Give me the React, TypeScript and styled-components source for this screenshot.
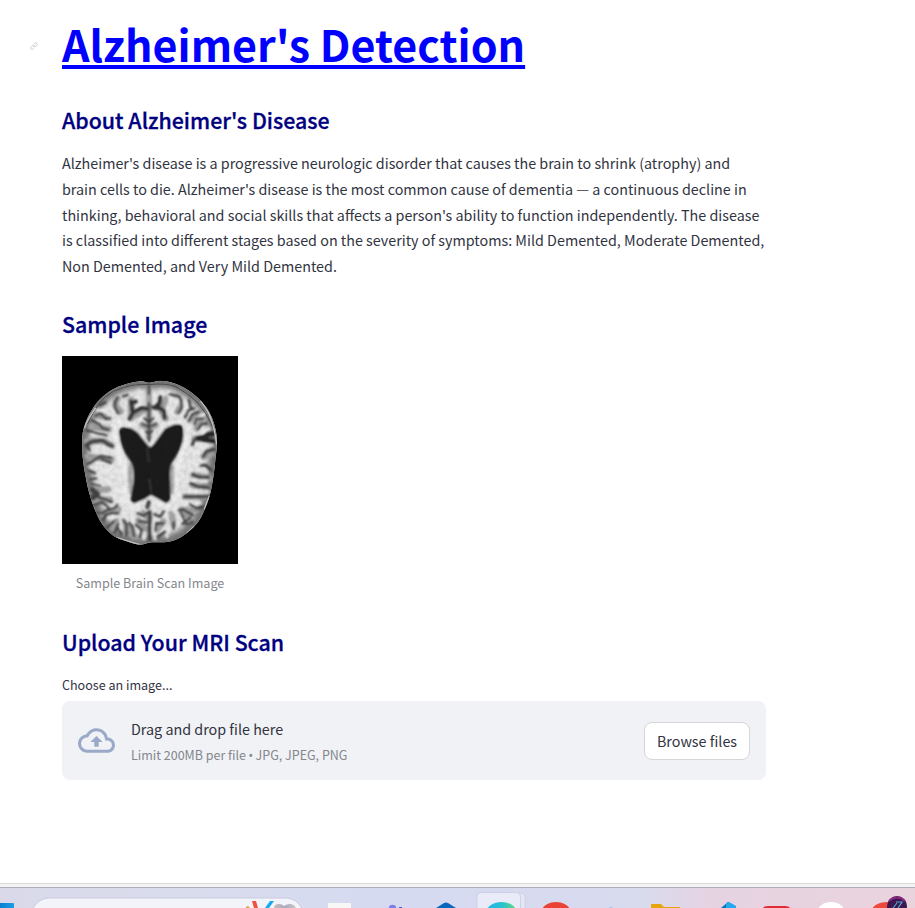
import React from "react";
import styled, { createGlobalStyle } from "styled-components";

const GlobalStyle = createGlobalStyle`
  * { box-sizing: border-box; }
  html, body { margin: 0; padding: 0; overflow: hidden; background: #fff; }
  body { font-family: "Source Sans Pro", "Noto Sans CJK SC", "Noto Sans", sans-serif; color: #31333f; }
`;

const Screen = styled.div`
  width: 915px;
  height: 908px;
  overflow: hidden;
  display: flex;
  flex-direction: column;
`;

const Main = styled.main`
  flex: 1;
  min-height: 0;
  padding: 15px 0 0 62px;
  width: 766px;
`;

const TitleRow = styled.div`
  display: flex;
  align-items: center;
  height: 60px;
  margin-left: -32px;
`;

const Anchor = styled.span`
  width: 32px;
  height: 8px;
  margin-top: 2px;
  display: flex;
`;

const Title = styled.h1`
  margin: -4px 0 0;
  color: #0000ff;
  font-size: 43px;
  line-height: 60px;
  font-weight: 700;
  white-space: nowrap;
  text-decoration: underline;
  text-decoration-thickness: 4px;
  text-underline-offset: 3px;
  text-decoration-skip-ink: none;
`;

const Heading = styled.h2<{ $top: number }>`
  margin: ${(p) => p.$top}px 0 0;
  height: 36px;
  line-height: 36px;
  color: #000080;
  font-size: 21.36px;
  font-weight: 500;
  -webkit-text-stroke: 0.3px #000080;
  white-space: nowrap;
`;

const Paragraph = styled.p`
  margin: 12.35px 0 0;
  height: 128px;
  font-size: 14.34px;
  line-height: 25.6px;
  white-space: nowrap;
`;

const Line = styled.span`
  display: block;
  width: max-content;
`;

const Figure = styled.figure`
  margin: 13.65px 0 0;
  width: 176px;
`;

const Caption = styled.figcaption`
  margin-top: 8px;
  height: 22px;
  text-align: center;
  font-size: 12.55px;
  line-height: 22px;
  color: #85868d;
`;

const Label = styled.label`
  display: block;
  margin-top: 14px;
  height: 22px;
  font-size: 12.55px;
  line-height: 22px;
`;

const Dropzone = styled.section`
  margin-top: 5px;
  height: 79px;
  padding: 0 16px;
  border-radius: 8px;
  background: #f0f2f6;
  display: flex;
  align-items: center;
`;

const DropText = styled.div`
  flex: 1;
  margin-left: 16px;
  padding-top: 2px;
`;

const DropTitle = styled.div`
  font-size: 14.34px;
  line-height: 26px;
`;

const DropHint = styled.div`
  font-size: 12.5px;
  line-height: 25px;
  color: #85868d;
`;

const Bullet = styled.span`
  font-family: "Noto Sans", sans-serif;
  font-size: 12px;
  line-height: 1;
  margin: 0 -0.3px;
`;

const Browse = styled.button`
  width: 106px;
  height: 38px;
  margin-top: 1px;
  padding: 0;
  border: 1px solid #d6d6d9;
  border-radius: 8px;
  background: #fff;
  color: #31333f;
  font-family: inherit;
  font-size: 14.34px;
  line-height: 24px;
`;

const WindowEdge = styled.div`
  height: 5px;
  background: #f3f3f3;
  border-top: 1px solid #d9d9d9;
  border-bottom: 1px solid #adadb8;
`;

const Taskbar = styled.footer`
  height: 20px;
  background: linear-gradient(90deg, #d9d9ea 0, #d9dcec 18%, #d6daf1 42%, #d8dbee 70%, #e6d3e2 78%, #e9d3dd 100%);
`;

type Point = [number, number];

const outline: Point[] = [
  [282, 98], [262, 94], [240, 96], [205, 105], [170, 120], [135, 148], [110, 181], [91, 220],
  [82, 260], [83, 320], [92, 380], [103, 430], [120, 480], [142, 523], [175, 557], [215, 574],
  [255, 584], [290, 577], [335, 576], [375, 563], [412, 535], [439, 500], [463, 440], [475, 380],
  [481, 330], [486, 275], [479, 228], [462, 185], [430, 145], [390, 115], [352, 98], [318, 92],
];

/** Closed Catmull-Rom curve through the given points. */
const closedCurve = (pts: Point[]) => {
  const n = pts.length;
  const parts = pts.map((p, i) => {
    const before = pts[(i + n - 1) % n];
    const next = pts[(i + 1) % n];
    const after = pts[(i + 2) % n];
    const c1 = [p[0] + (next[0] - before[0]) / 6, p[1] + (next[1] - before[1]) / 6];
    const c2 = [next[0] - (after[0] - p[0]) / 6, next[1] - (after[1] - p[1]) / 6];
    return `C${c1.join(" ")} ${c2.join(" ")} ${next.join(" ")}`;
  });
  return `M${pts[0].join(" ")}${parts.join("")}Z`;
};

const skull = closedCurve(outline);

const BrainScan = () => (
  <svg width="176" height="208" viewBox="21 18 528 624" display="block">
    <defs>
      <clipPath id="skull">
        <path d={skull} />
      </clipPath>
      <filter id="soft" x="-5%" y="-5%" width="110%" height="110%">
        <feGaussianBlur stdDeviation="3" />
      </filter>
      <filter id="wide" x="-10%" y="-10%" width="120%" height="120%">
        <feGaussianBlur stdDeviation="8" />
      </filter>
      <filter id="grain" x="0" y="0" width="100%" height="100%">
        <feTurbulence type="fractalNoise" baseFrequency="0.07" numOctaves="3" seed="4" />
        <feColorMatrix values="0 0 0 0 0  0 0 0 0 0  0 0 0 0 0  1.3 0 0 0 -0.45" />
      </filter>
    </defs>
    <rect x="21" y="18" width="528" height="624" fill="#000" />
    <g clipPath="url(#skull)">
      <rect x="70" y="80" width="430" height="520" fill="#e6e6e6" />
      <path d={skull} fill="none" stroke="#777" strokeWidth="42" filter="url(#wide)" />
      <g filter="url(#soft)" fill="none" strokeLinecap="round" strokeLinejoin="round">
        <g stroke="#a2a2a2" strokeWidth="19">
          <path d="M228 150V205L270 178 M335 145L318 180 332 205 M282 110V260 M262 225L282 235 302 225 M188 145L180 165 197 185" />
          <path d="M95 275L145 272 172 288 M98 320L170 328 M110 230L162 238 M120 195L165 202 M110 422L160 418 M110 450L165 450 M140 490L190 478 M175 535L190 500 M215 550L205 515 M238 560L225 530" />
          <path d="M380 165L368 185 M405 215L425 190 M425 235L440 205 M480 268L420 265 M470 310L445 320 M465 385L415 375 M455 410L412 405 M455 440L390 440 M420 480L380 480 M410 510L380 490 M350 490L355 525 M325 515L305 540 M250 510L275 540 M265 490L280 505" />
        </g>
        <g stroke="#eaeaea" strokeWidth="9">
          <path d="M125 180L150 181 179 209 M113 254L145 260 180 252 M103 305L145 295 185 308 M105 350L150 356 185 365 M117 402L165 397 195 430 M155 471L195 463 M164 503L195 498 199 536 M232 500L235 515 M267 566V548 M300 567L293 525" />
          <path d="M253 122L250 155 260 158 M295 127L297 154 M340 126L346 161 339 190 M389 159L391 190 M408 225L448 192 M425 252L462 236 M430 289L470 285 M425 334L455 367 M402 391L455 394 M400 426H460 M384 458L436 458 M350 478L397 513 M340 530L336 560" />
        </g>
        <g stroke="#424242" strokeWidth="8">
          <path d="M282 102V132 M282 160V275" stroke="#4a4a4a" />
          <path d="M228 154L232 176 M244 154L228 160 M223 207L234 188 260 174 275 176 M234 188L230 175" stroke="#303030" strokeWidth="12" />
          <path d="M316 142L314 160 306 165 318 178 M294 172L318 176 327 184 329 204" stroke="#303030" strokeWidth="12" />
          <path d="M262 222L282 231 303 222 M268 205L282 217 295 205 M273 245L282 252 292 243 M282 261V274" strokeWidth="7" />
          <path d="M188 143L180 156 180 173 190 190 M204 139L218 135 M135 164L151 157 M121 197L137 190 153 207 166 204 M111 211L134 224 143 235 160 239 M95 240L124 250 155 256" />
          <path d="M94 285L110 275 142 271 160 283 172 288" strokeWidth="12" />
          <path d="M94 286L105 302 M98 343L121 328 138 318 168 324 M140 328L168 338" />
          <path d="M101 361L120 370 M105 389L124 385 M109 401L136 407" strokeWidth="7" />
          <path d="M112 420L127 432 113 444" strokeWidth="17" />
          <path d="M132 443L153 448 171 457 M117 464L142 457 160 472 M128 489L143 489 156 480 178 474 187 465 M145 510L151 496 170 489 189 491 M158 532L176 514 M180 545L190 522 M200 553L188 532 M214 557L215 524 204 510 M237 559L233 533 224 519 M255 561L261 541 243 524 M251 513L275 517 M248 490L267 497 277 488" />
          <path d="M282 455L277 472 M284 486V568" strokeWidth="12" />
          <path d="M326 484L316 500 298 493 M325 520L304 520 301 541 M331 545L307 562 M356 518V536" />
          <path d="M344 133L372 139 379 151 381 172 371 188 M402 150L408 177 M390 202L400 181 417 175 M402 212L412 193 431 186 M417 222L426 207 444 205 M429 238L440 222 455 220" />
          <path d="M428 265L449 263 461 252 474 253 M443 267L475 273" strokeWidth="17" stroke="#252525" />
          <path d="M417 270L412 284 M476 299L455 304 445 319 M438 347L452 346 467 359 M413 374L435 382 461 382 M407 400L425 409 459 412 M389 440L460 440" strokeWidth="10" />
          <path d="M405 462L425 475 447 470 M371 481L385 479 413 495 M378 490L390 513 M405 503L383 522 M395 523L414 515" />
        </g>
        <path d="M190 215Q210 216 226 227L277 283 284 292 294 282 333 232 378 212 M180 235Q190 320 211 362L210 450 M396 225Q389 320 362 365L359 435 M200 447L229 469 278 439 340 469 370 430" stroke="#eee" strokeWidth="15" />
        <path d="M229 345Q223 370 229 425 M350 350V425" stroke="#aaa" strokeWidth="15" />
        <path d="M193 244Q197 231 214 234Q234 235 251 253L275 283 285 294 296 285 330 238Q361 219 377 226Q388 238 382 274Q372 306 350 336Q340 356 344 395L345 450 334 459 310 445 288 433 268 446 238 459 229 452Q231 425 237 399Q242 353 226 330Q197 293 193 244Z" fill="#1c1c1c" stroke="#222" strokeWidth="4" />
        <path d="M278 294L280 335 M283 388L289 429" stroke="#484848" strokeWidth="3" />
      </g>
      <path d="M97 222Q120 172 150 141Q175 120 205 113Q240 101 282 104Q330 98 362 110Q398 129 426 156Q455 188 474 232" fill="none" stroke="#505050" strokeWidth="3" />
      <path d="M88 235Q98 206 122 174 M437 153Q475 196 485 284 M463 438L448 478 M418 529L394 551 M185 563L253 583" fill="none" stroke="#c5c5c5" strokeWidth="4" />
      <rect x="70" y="80" width="430" height="520" filter="url(#grain)" opacity=".12" />
    </g>
  </svg>
);

const LinkIcon = () => (
  <svg width="8" height="8" viewBox="0 0 24 24" fill="none" stroke="#bbb" strokeWidth="2">
    <path d="M10 12a4 4 0 0 0 6 2l5-4a4 4 0 0 0-6-6l-3 2 M14 12a4 4 0 0 0-6-2l-5 5a4 4 0 0 0 6 6l3-3" />
  </svg>
);

const CloudIcon = () => (
  <svg width="37" height="37" viewBox="0 0 24 24" fill="#9ba9c9">
    <path d="M19.35 10.04C18.67 6.59 15.64 4 12 4 9.11 4 6.6 5.64 5.35 8.04 2.34 8.36 0 10.91 0 14c0 3.31 2.69 6 6 6h13c2.76 0 5-2.24 5-5 0-2.64-2.05-4.78-4.65-4.96zM19 18H6c-2.21 0-4-1.79-4-4 0-2.05 1.53-3.76 3.56-3.97l1.07-.11.5-.95C8.08 7.14 9.94 6 12 6c2.62 0 4.88 1.86 5.39 4.43l.3 1.5 1.53.11c1.56.1 2.78 1.41 2.78 2.96 0 1.65-1.35 3-3 3zM8 13h2.55v3h2.9v-3H16l-4-4z" />
  </svg>
);

const TaskbarIcons = () => (
  <svg width="915" height="20" viewBox="0 888 915 20" display="block">
    <defs>
      <linearGradient id="edge"><stop stopColor="#24b4f4" /><stop offset=".55" stopColor="#2bc3ca" /><stop offset="1" stopColor="#67d982" /></linearGradient>
      <linearGradient id="start"><stop stopColor="#087fd1" /><stop offset="1" stopColor="#1c9ee5" /></linearGradient>
      <linearGradient id="heart"><stop stopColor="#c5bfb9" /><stop offset=".5" stopColor="#aaa9bd" /><stop offset="1" stopColor="#c8c8c9" /></linearGradient>
    </defs>
    <path d="M0 903h13q1 0 1 1v4H0z" fill="url(#start)" />
    <rect x="31.500" y="898" width="272" height="36" rx="18" fill="#f3f4fa" stroke="#c8cadd" />
    <path d="M252 901h4l2 7h-4z" fill="#ef523d" />
    <path d="M270 901h4l-5 7h-4z" fill="#17aaf1" />
    <path d="M246 907l2-1 2 2h-4z" fill="#dfa63c" />
    <path d="M274 908q0-4 5-4 3 0 5 2 3-2 6-2 4 0 6 4z" fill="url(#heart)" />
    <rect x="328" y="903" width="23" height="7" rx="1" fill="#f7f7f5" />
    <circle cx="392.500" cy="908.500" r="3.700" fill="#7a7fe5" />
    <path d="M399 907h3v1h-3z" fill="#5059c9" />
    <path d="M436 908l8-5q2-1 4 0l8 5z" fill="#0868bd" />
    <rect x="484" y="893" width="41" height="28" rx="4" fill="#e5e7f7" stroke="#cfd2e8" />
    <rect x="477" y="892.500" width="43.500" height="28" rx="4" fill="#e9ebf9" stroke="#cdd1e8" />
    <ellipse cx="501.500" cy="912" rx="15" ry="10" fill="url(#edge)" />
    <ellipse cx="556" cy="912" rx="14.500" ry="10" fill="#ea4335" />
    <circle cx="611" cy="910" r="3" fill="#a7c7e7" />
    <path d="M651 905q0-1 1-1h9l3 3h16v2h-29z" fill="#e5a50b" />
    <path d="M721 908l7-6 7 4v2z" fill="#0876b9" />
    <path d="M726 903l3-1 7 4v2h-10z" fill="#24a8ee" />
    <path d="M763 908q1-2 5-2h17q4 0 5 2z" fill="#e32b35" />
    <ellipse cx="831" cy="913" rx="14" ry="11" fill="#fff" />
    <ellipse cx="886" cy="911" rx="14" ry="9" fill="#ed493d" />
    <circle cx="897" cy="906" r="10" fill="#3d174f" />
    <path d="M889 901q8-7 16 0" fill="none" stroke="#8a2780" strokeWidth="2" />
    <path d="M893 908l4-5 M896 902h6l-4 6" fill="none" stroke="#50a9d2" strokeWidth="1.200" />
  </svg>
);

export default function App() {
  return (
    <Screen>
      <GlobalStyle />
      <Main>
        <TitleRow>
          <Anchor><LinkIcon /></Anchor>
          <Title>Alzheimer's Detection</Title>
        </TitleRow>
        <Heading $top={27}>About Alzheimer's Disease</Heading>
        <Paragraph>
          <Line>Alzheimer's disease is a progressive neurologic disorder that causes the brain to shrink (atrophy) and</Line>
          <Line>brain cells to die. Alzheimer's disease is the most common cause of dementia — a continuous decline in</Line>
          <Line>thinking, behavioral and social skills that affects a person's ability to function independently. The disease</Line>
          <Line>is classified into different stages based on the severity of symptoms: Mild Demented, Moderate Demented,</Line>
          <Line>Non Demented, and Very Mild Demented.</Line>
        </Paragraph>
        <Heading $top={28}>Sample Image</Heading>
        <Figure>
          <BrainScan />
          <Caption>Sample Brain Scan Image</Caption>
        </Figure>
        <Heading $top={30}>Upload Your MRI Scan</Heading>
        <Label>Choose an image...</Label>
        <Dropzone>
          <CloudIcon />
          <DropText>
            <DropTitle>Drag and drop file here</DropTitle>
            <DropHint>Limit 200MB per file <Bullet>•</Bullet> JPG, JPEG, PNG</DropHint>
          </DropText>
          <Browse>Browse files</Browse>
        </Dropzone>
      </Main>
      <WindowEdge />
      <Taskbar><TaskbarIcons /></Taskbar>
    </Screen>
  );
}
